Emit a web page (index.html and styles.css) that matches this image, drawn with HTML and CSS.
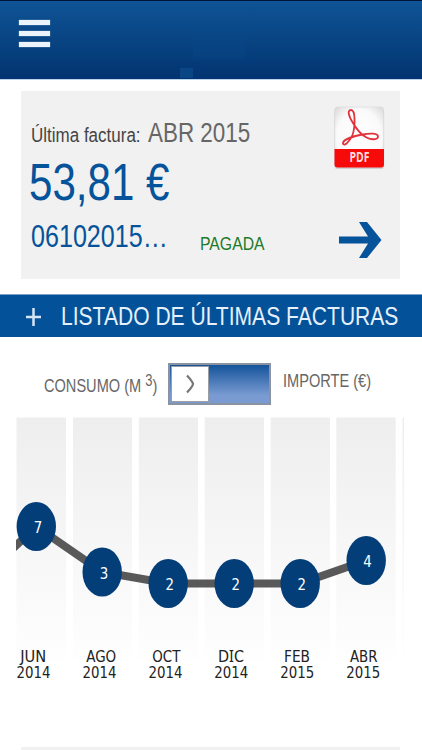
FILE: index.html
```html
<!DOCTYPE html>
<html lang="es">
  <head>
    <meta charset="UTF-8" />
    <meta name="viewport" content="width=device-width, initial-scale=1.0" />
    <title>Facturas</title>
    <link rel="stylesheet" href="styles.css">
  </head>
  <body>
    <header class="header">
      <button class="menu" aria-label="Menú">
        <span></span>
        <span></span>
        <span></span>
      </button>
      <div class="logo"></div>
      <div class="logo-mark"></div>
    </header>

    <section class="card">
      <div class="bill">
        <div class="bill-title">
          <span class="narrow label">Última factura:</span>
          <span class="narrow period">ABR 2015</span>
        </div>
        <div class="amount"><span class="narrow">53,81 €</span></div>
        <div class="bill-footer">
          <span class="narrow number">06102015…</span>
          <span class="narrow status">PAGADA</span>
        </div>
      </div>
      <div class="actions">
        <svg class="pdf" width="54" height="66" viewBox="0.5 0 54 66">
          <defs>
            <radialGradient id="paper" cx=".5" cy=".5" r=".7">
              <stop offset="0" stop-color="#fff" />
              <stop offset=".65" stop-color="#fafafa" />
              <stop offset="1" stop-color="#d8d8d8" />
            </radialGradient>
          </defs>
          <rect x="2" y="4" width="49.5" height="60" rx="3" fill="#bbb" opacity=".6" />
          <rect x="2.2" y="2" width="49" height="60" rx="3" fill="url(#paper)" stroke="#d8d8d8" stroke-width=".6" />
          <path d="M2 44h49.500v15.500a3 3 0 0 1-3 3H5a3 3 0 0 1-3-3z" fill="#f60a0a" />
          <path d="M18.500 5C14.500 5 16 11 20.500 18C24 24 28 29.500 34 32.500C39 35 45.500 35 45.500 31.500C45.500 28 38 28 30 29.500C22 31 10 34.500 10.500 38.500C11.500 42 17 37 20 30C22.500 23 23.500 5 18.500 5z" fill="none" stroke="#e2323c" stroke-width="1.800" />
          <text x="17" y="57" textLength="20" lengthAdjust="spacingAndGlyphs" class="pdf-text">PDF</text>
        </svg>
        <svg class="arrow" width="44" height="36" viewBox="0 0 44 36">
          <path d="M0 14.500h29L20 0h8l14.500 18L28 36h-8l9-14.500H0z" fill="#05539a" />
        </svg>
      </div>
    </section>

    <div class="list-bar">
      <svg width="16" height="18" viewBox="0 0 16 18">
        <path d="M0 9h15M7.500 0v18" stroke="#d5e5f5" stroke-width="2.500" />
      </svg>
      <span class="narrow">LISTADO DE ÚLTIMAS FACTURAS</span>
    </div>

    <div class="switch-row">
      <span class="narrow consumo">CONSUMO (M <sup>3</sup>)</span>
      <div class="switch">
        <div class="knob">
          <svg width="10" height="20" viewBox="0 0 10 20">
            <path d="M2 1.500Q8 8 8 10T2 18.500" fill="none" stroke="#777" stroke-width="2.200" />
          </svg>
        </div>
      </div>
      <span class="narrow importe">IMPORTE (€)</span>
    </div>

    <svg class="chart" width="388" height="270" viewBox="16 417 388 270">
      <defs>
        <linearGradient id="column" x1="0" y1="417" x2="0" y2="658" gradientUnits="userSpaceOnUse">
          <stop offset="0" stop-color="#eee" />
          <stop offset="1" stop-color="#fefefe" />
        </linearGradient>
      </defs>
      <g fill="url(#column)">
        <rect x="16.500" y="417.500" width="49.500" height="242" />
        <rect x="73" y="417.500" width="59" height="242" />
        <rect x="138.800" y="417.500" width="59.200" height="242" />
        <rect x="204.700" y="417.500" width="59.300" height="242" />
        <rect x="270.700" y="417.500" width="59.300" height="242" />
        <rect x="336.300" y="417.500" width="59.400" height="242" />
        <rect x="402.500" y="417.500" width="1.500" height="242" />
      </g>
      <polyline points="-5,565 36.300,526.500 102.200,572 168.200,583.500 234,583.500 300,583.500 366,560.500" class="line" />
      <g class="dots">
        <ellipse cx="36.300" cy="526.500" rx="19.700" ry="24.500" />
        <ellipse cx="102.200" cy="572" rx="19.700" ry="24.500" />
        <ellipse cx="168.200" cy="583.500" rx="19.700" ry="24.500" />
        <ellipse cx="234.200" cy="583.500" rx="19.700" ry="24.500" />
        <ellipse cx="300.200" cy="583.500" rx="19.700" ry="24.500" />
        <ellipse cx="366.200" cy="560.500" rx="19.700" ry="24.500" />
      </g>
      <g class="values">
        <text x="38" y="532.500" textLength="8.500" lengthAdjust="spacingAndGlyphs">7</text>
        <text x="104" y="578.500" textLength="8.500" lengthAdjust="spacingAndGlyphs">3</text>
        <text x="169.800" y="590" textLength="8.500" lengthAdjust="spacingAndGlyphs">2</text>
        <text x="235.700" y="590" textLength="8.500" lengthAdjust="spacingAndGlyphs">2</text>
        <text x="301.700" y="590" textLength="8.500" lengthAdjust="spacingAndGlyphs">2</text>
        <text x="367.500" y="567" textLength="8.500" lengthAdjust="spacingAndGlyphs">4</text>
      </g>
      <g class="months">
        <text x="33.300" y="662" textLength="26" lengthAdjust="spacingAndGlyphs">JUN</text>
        <text x="33.500" y="678" textLength="34" lengthAdjust="spacingAndGlyphs">2014</text>
        <text x="101.200" y="662" textLength="30" lengthAdjust="spacingAndGlyphs">AGO</text>
        <text x="99.500" y="678" textLength="34" lengthAdjust="spacingAndGlyphs">2014</text>
        <text x="166.300" y="662" textLength="28" lengthAdjust="spacingAndGlyphs">OCT</text>
        <text x="165.500" y="678" textLength="34" lengthAdjust="spacingAndGlyphs">2014</text>
        <text x="231" y="662" textLength="26" lengthAdjust="spacingAndGlyphs">D<tspan class="serif-i">I</tspan>C</text>
        <text x="231.300" y="678" textLength="34" lengthAdjust="spacingAndGlyphs">2014</text>
        <text x="297" y="662" textLength="26" lengthAdjust="spacingAndGlyphs">FEB</text>
        <text x="297.300" y="678" textLength="34" lengthAdjust="spacingAndGlyphs">2015</text>
        <text x="363.700" y="662" textLength="27.500" lengthAdjust="spacingAndGlyphs">ABR</text>
        <text x="363.300" y="678" textLength="34" lengthAdjust="spacingAndGlyphs">2015</text>
      </g>
    </svg>

    <section class="next-card"></section>
  </body>
</html>
```
FILE: styles.css
```css
* {
  box-sizing: border-box;
  margin: 0;
  padding: 0;
}

body {
  width: 422px;
  height: 750px;
  overflow: hidden;
  font-family: "Liberation Sans", Arial, sans-serif;
  background-color: #fff;
}

/* condensed text, the box keeps its own width */
.narrow {
  display: block;
  flex: none;
  white-space: nowrap;
  transform: scaleX(0.81);
  transform-origin: 0 0;
}

.header {
  position: relative;
  height: 80px;
  padding: 20px 19px;
  background: linear-gradient(#0f5496, #023470);
  border-top: 1px solid #021433;
  border-bottom: 1px solid #bcd3ee;
}

.menu {
  display: flex;
  flex-direction: column;
  gap: 6px;
  margin-top: -1px;
  border: none;
  background: none;
}

.menu span {
  width: 31px;
  height: 5px;
  background-color: #edf3fb;
  box-shadow: 0 0 1px #b4c8e0;
}

.logo {
  position: absolute;
  left: 193px;
  top: 30px;
  width: 52px;
  height: 28px;
  background-color: #0a4a8a;
  opacity: 0.3;
}

.logo-mark {
  position: absolute;
  left: 180px;
  top: 67px;
  width: 13px;
  height: 10px;
  background-color: #0a4686;
}

.card {
  display: flex;
  justify-content: space-between;
  width: 379px;
  height: 188px;
  margin: 11px 0 0 21px;
  background-color: #f1f1f1;
}

.bill {
  width: 260px;
  padding: 26px 0 0 10px;
}

.bill-title {
  display: grid;
  grid-template-columns: 117px auto;
  align-items: baseline;
  height: 32px;
  line-height: 32px;
}

.label {
  font-size: 20px;
  color: #444;
  transform: scaleX(0.85);
}

.period {
  font-size: 27px;
  color: #666;
  transform: scaleX(0.83);
}

.amount {
  height: 68px;
  margin-left: -2px;
  font-size: 52px;
  line-height: 67px;
  color: #05539a;
}

.bill-footer {
  display: grid;
  grid-template-columns: 169px auto;
  align-items: baseline;
  line-height: 40px;
}

.number {
  font-size: 31px;
  color: #05539a;
}

.status {
  padding-top: 3px;
  font-size: 19px;
  color: #1d7a2a;
  transform: translateY(3px) scaleX(0.83);
}

.actions {
  display: flex;
  flex-direction: column;
  width: 67px;
  padding-top: 14px;
}

.pdf-text {
  font-family: "Open Sans", sans-serif;
  font-size: 14px;
  font-weight: 700;
  fill: #ffdede;
}

.arrow {
  margin: 51px 0 0 6px;
}

.list-bar {
  display: grid;
  grid-template-columns: 35px auto;
  align-items: center;
  height: 43px;
  margin-top: 15px;
  padding-left: 26px;
  font-size: 26px;
  line-height: 43px;
  color: #e6f0fa;
  background-color: #035299;
  border-top: 1px solid #77a3cd;
}

.switch-row {
  display: grid;
  grid-template-columns: 124px 115px auto;
  height: 80px;
  padding: 26px 0 0 44px;
  font-size: 18px;
  line-height: 22px;
  color: #666;
}

.consumo {
  padding-top: 12px;
}

.consumo sup {
  font-size: 16px;
  line-height: 0;
  vertical-align: 6px;
}

.importe {
  padding-top: 7px;
}

.switch {
  width: 103px;
  height: 42px;
  background: linear-gradient(#14549b, #7a9bd2 80%);
  border: 2px solid #8b93a0;
}

.knob {
  display: flex;
  align-items: center;
  justify-content: center;
  width: 38px;
  height: 36px;
  margin: 1px;
  background-color: #fff;
  border: 1px solid #9a9da3;
}

.chart {
  display: block;
  margin-left: 16px;
}

.line {
  fill: none;
  stroke: #595959;
  stroke-width: 8;
}

.dots {
  fill: #043e78;
}

.values,
.months {
  font-family: "DejaVu Sans", Verdana, sans-serif;
  text-anchor: middle;
}

.values {
  font-size: 15px;
  fill: #fff;
}

.months {
  font-size: 16.500px;
  fill: #222;
}

.serif-i {
  font-family: "Noto Sans", sans-serif;
}

.next-card {
  width: 379px;
  height: 3px;
  margin: 60px 0 0 21px;
  background-color: #f1f1f1;
}
```
